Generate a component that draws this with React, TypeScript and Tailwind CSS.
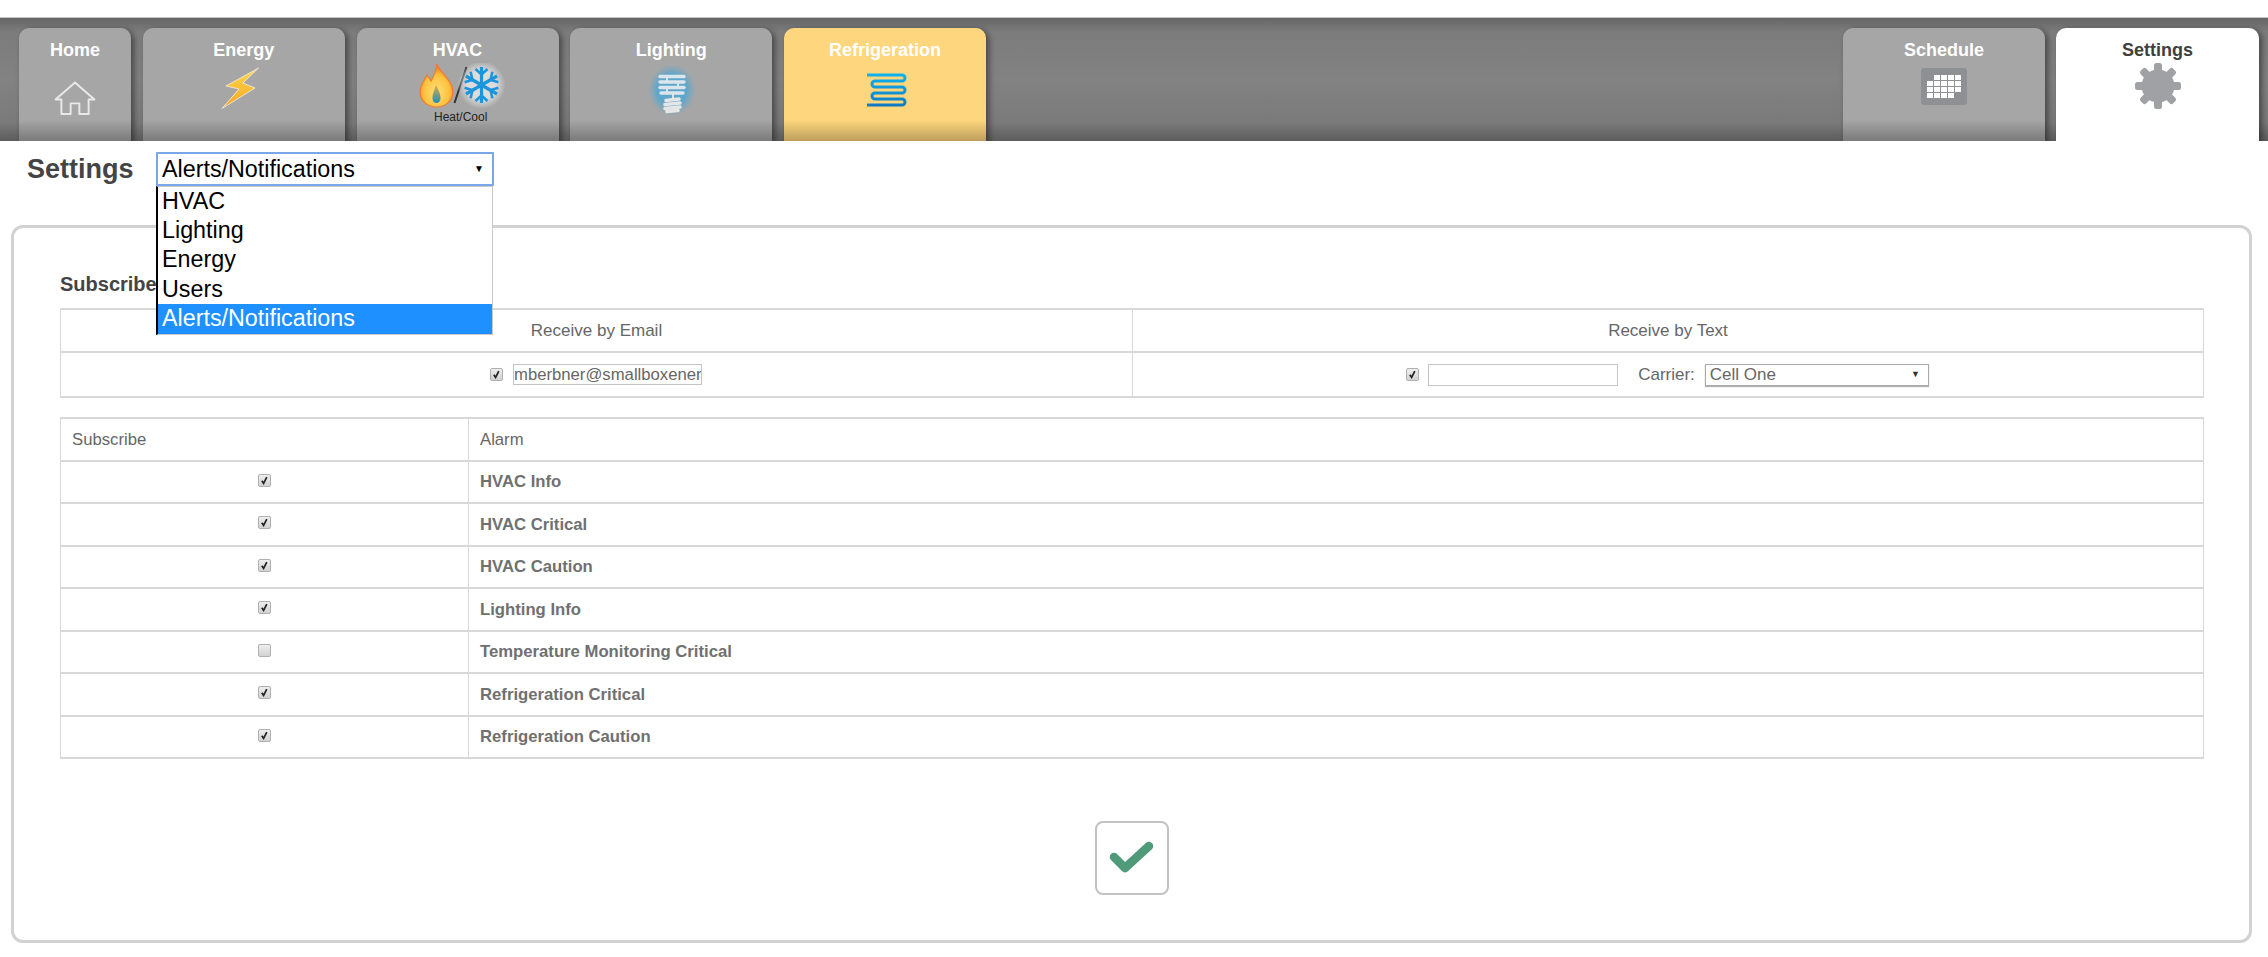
import React from "react";

const FONT = "font-['Liberation_Sans',Arial,sans-serif]";

function Check({ on = true }: { on?: boolean }) {
  return (
    <span className="inline-flex h-[13px] w-[13px] shrink-0 items-center justify-center rounded-[2px] border border-[#b0b0b0] bg-gradient-to-b from-[#eeeeee] to-[#d2d2d2]">
      {on && (
        <svg width="9" height="9" viewBox="0 0 9 9">
          <path d="M1.8 4.8 L3.6 7.4 L6.8 1.2" fill="none" stroke="#222" strokeWidth="1.7" />
        </svg>
      )}
    </span>
  );
}

function HomeIcon() {
  return (
    <svg width="44" height="35" viewBox="0 0 44 36" fill="none" stroke="#e9e9e9" strokeWidth="2">
      <path d="M2 19 L22 1.5 L42 19 L36 19 L36 34 L26.5 34 L26.5 23 L17.5 23 L17.5 34 L8 34 L8 19 Z" strokeLinejoin="round" />
    </svg>
  );
}

function BoltIcon() {
  return (
    <svg width="40" height="43" viewBox="0 0 40 43">
      <defs>
        <linearGradient id="bolt" x1="0" y1="0" x2="0" y2="1">
          <stop offset="0" stopColor="#ffd84f" />
          <stop offset="1" stopColor="#f5a623" />
        </linearGradient>
      </defs>
      <path d="M37.5 1 L5 19 L18 22 L1 41.5 L34 21 L22 16 Z" fill="url(#bolt)" stroke="#f4f0e2" strokeWidth="0.8" strokeLinejoin="round" />
    </svg>
  );
}

function HvacIcon() {
  const arms = [0, 60, 120, 180, 240, 300];
  return (
    <svg width="90" height="46" viewBox="0 0 90 46">
      <defs>
        <radialGradient id="flame" cx="0.5" cy="0.65" r="0.6">
          <stop offset="0" stopColor="#ffe27a" />
          <stop offset="0.65" stopColor="#fcc13d" />
          <stop offset="1" stopColor="#f0772a" />
        </radialGradient>
        <linearGradient id="inner" x1="0" y1="0" x2="0" y2="1">
          <stop offset="0" stopColor="#e9a53a" />
          <stop offset="1" stopColor="#1b8fc4" />
        </linearGradient>
        <radialGradient id="glow">
          <stop offset="0.6" stopColor="#dcdcdc" />
          <stop offset="1" stopColor="#dcdcdc" stopOpacity="0" />
        </radialGradient>
      </defs>
      <path d="M18 1 C20 9 34 17 34 29 C34 38 26 44 17.5 44 C9 44 1 38 1 29 C1 21 6 17 8 12 C10 15 11 16 12 18 C15 13 17 7 18 1 Z" fill="url(#flame)" stroke="#ee7b2c" strokeWidth="1.2" />
      <path d="M17 22 C20 28 21.5 31 21.5 35 C21.5 38.5 19.5 40 17.5 40 C15 40 13.5 38.5 13.5 35 C13.5 31 15 28 17 22 Z" fill="url(#inner)" />
      <line x1="47.5" y1="4" x2="35.5" y2="40" stroke="#333" strokeWidth="2" />
      <circle cx="62.5" cy="22" r="24" fill="url(#glow)" />
      <g stroke="#1b95dc" strokeWidth="3.2" fill="none" strokeLinecap="butt">
        {arms.map((a) => (
          <g key={a} transform={`rotate(${a} 62.5 22)`}>
            <line x1="62.5" y1="22" x2="62.5" y2="4" />
            <path d="M56.5 6 L62.5 11.5 L68.5 6" strokeWidth="2.6" />
          </g>
        ))}
      </g>
    </svg>
  );
}

function BulbIcon() {
  return (
    <svg width="52" height="56" viewBox="0 0 52 56">
      <defs>
        <radialGradient id="bulbglow">
          <stop offset="0.6" stopColor="#5da6cc" />
          <stop offset="1" stopColor="#6fa8c4" stopOpacity="0" />
        </radialGradient>
      </defs>
      <ellipse cx="26" cy="25" rx="24" ry="26" fill="url(#bulbglow)" />
      <g fill="none" stroke="#dbe6ec" strokeWidth="3.4" strokeLinecap="round">
        <path d="M14 11.5 H38" />
        <path d="M14 17 H38" />
        <path d="M14 22.5 H38" />
        <path d="M15 28 H37" />
        <path d="M21 11.5 V17 M32 17 V22.5 M21 22.5 V28 M27 28 V34" strokeWidth="2" />
      </g>
      <g fill="none" stroke="#e6e6e6" strokeWidth="3.6" strokeLinecap="round">
        <path d="M20 35.5 L33 34" />
        <path d="M19 39.5 L34 38" />
        <path d="M19 43.5 L34 42" />
        <path d="M21 46.5 L32 45.5" />
      </g>
    </svg>
  );
}

function CoilIcon() {
  return (
    <svg width="40" height="34" viewBox="0 0 40 34">
      <defs>
        <linearGradient id="coil" x1="0" y1="0" x2="0" y2="34" gradientUnits="userSpaceOnUse">
          <stop offset="0" stopColor="#0eb4ef" />
          <stop offset="1" stopColor="#0f78c2" />
        </linearGradient>
      </defs>
      <path
        d="M0 2 H35 A3 3 0 0 1 35 8 H8 A3 3 0 0 0 8 14 H35 A3 3 0 0 1 35 20 H8 A3 3 0 0 0 8 26 H35 A3 3 0 0 1 35 32 H0"
        fill="none"
        stroke="url(#coil)"
        strokeWidth="3"
      />
    </svg>
  );
}

function CalendarIcon() {
  const rows = [
    [0, 1, 1, 1, 1],
    [1, 1, 1, 1, 1],
    [1, 1, 1, 1, 1],
    [1, 1, 1, 1, 0],
  ];
  return (
    <div className="flex h-[37px] w-[46px] flex-col items-center justify-center gap-[1px] rounded-[3px] bg-[#8f9094]">
      {rows.map((r, i) => (
        <div key={i} className="flex gap-[1px]">
          {r.map((c, j) => (
            <span key={j} className={c ? "h-[5px] w-[6px] bg-white" : "h-[5px] w-[6px]"} />
          ))}
        </div>
      ))}
    </div>
  );
}

function GearIcon() {
  const teeth = [0, 45, 90, 135, 180, 225, 270, 315];
  return (
    <svg width="48" height="48" viewBox="0 0 48 48" fill="#a0a1a5">
      <circle cx="24" cy="24" r="16.5" />
      {teeth.map((a) => (
        <rect key={a} x="20" y="1" width="8" height="12" rx="2.5" transform={`rotate(${a} 24 24)`} />
      ))}
    </svg>
  );
}

type TabProps = {
  label: string;
  w: string;
  tone?: "gray" | "gold" | "white";
  children: React.ReactNode;
  iconClass: string;
};

function Tab({ label, w, tone = "gray", children, iconClass }: TabProps) {
  const bg =
    tone === "gold"
      ? "bg-[linear-gradient(to_bottom,#fed67e_0,#fed67e_92px,#bd9f5c_100%)] text-white"
      : tone === "white"
      ? "bg-white text-[#3f3f3f]"
      : "bg-[linear-gradient(to_bottom,#a6a6a6_0,#a6a6a6_92px,#7a7a7a_100%)] text-white";
  return (
    <div className={`${w} ${bg} flex h-[113px] shrink-0 flex-col items-center rounded-t-[10px] pt-[12px] shadow-[3px_2px_6px_rgba(0,0,0,0.45)]`}>
      <div className="text-[18px] font-bold leading-[21px]">{label}</div>
      <div className={iconClass}>{children}</div>
    </div>
  );
}

const alarms: [string, boolean][] = [
  ["HVAC Info", true],
  ["HVAC Critical", true],
  ["HVAC Caution", true],
  ["Lighting Info", true],
  ["Temperature Monitoring Critical", false],
  ["Refrigeration Critical", true],
  ["Refrigeration Caution", true],
];

const options = ["HVAC", "Lighting", "Energy", "Users", "Alerts/Notifications"];

const CELL = "border-x border-y-2 border-[#d8d8d8]";

export default function App() {
  return (
    <div className={`${FONT} relative h-[957px] w-[2268px] overflow-hidden bg-white`}>
      {/* top navigation */}
      <div className="mt-[17px] flex h-[124px] items-end justify-between overflow-hidden border-t border-[#c4c4c4] bg-[linear-gradient(to_bottom,#666_0,#7c7c7c_14px,#828282_50%,#7a7a7a_85%,#5c5c5c_100%)] pl-[19px] pr-[9px]">
        <div className="flex gap-[11.75px]">
          <Tab label="Home" w="w-[112px]" iconClass="mt-[20px]">
            <HomeIcon />
          </Tab>
          <Tab label="Energy" w="w-[202px]" iconClass="mt-[6px] mr-[6px]">
            <BoltIcon />
          </Tab>
          <Tab label="HVAC" w="w-[202px]" iconClass="relative mt-[2px] ml-[13px]">
            <HvacIcon />
            <span className="absolute left-[15px] top-[47px] whitespace-nowrap text-[12px] leading-[14px] text-[#222]">Heat/Cool</span>
          </Tab>
          <Tab label="Lighting" w="w-[202px]" iconClass="mt-[4px] ml-[2px]">
            <BulbIcon />
          </Tab>
          <Tab label="Refrigeration" w="w-[202px]" tone="gold" iconClass="mt-[12px] ml-[3px]">
            <CoilIcon />
          </Tab>
        </div>
        <div className="flex gap-[11px]">
          <Tab label="Schedule" w="w-[202px]" iconClass="mt-[7px]">
            <CalendarIcon />
          </Tab>
          <Tab label="Settings" w="w-[203px]" tone="white" iconClass="mt-[1px]">
            <GearIcon />
          </Tab>
        </div>
      </div>

      {/* heading with open select */}
      <div className="flex h-[84px] items-start pl-[27px] pt-[11px]">
        <h1 className="mt-[1px] w-[129px] text-[27px] font-bold leading-[32px] text-[#444]">Settings</h1>
        <div className="relative z-10 w-[338px]">
          <div className="flex h-[34px] items-center justify-between rounded-[1px] border-2 border-[#7ba6ea] pl-[4px] pr-[8px] text-[23.3px] leading-[28px] text-black">
            <span>Alerts/Notifications</span>
            <span className="text-[10px] leading-none">▼</span>
          </div>
          <div className="absolute left-0 top-[34px] w-[337px] border border-l-2 border-[#c9c9c9] border-l-black bg-white text-[23.3px] leading-[29px] text-black">
            {options.map((o, i) => (
              <div key={o} className={i === 4 ? "h-[30px] bg-[#1e90ff] pl-[4px] text-white" : "h-[29.2px] pl-[4px]"}>
                {o}
              </div>
            ))}
          </div>
        </div>
      </div>

      {/* card */}
      <div className="ml-[11px] mr-[16px] h-[718px] rounded-[12px] border-[3px] border-[#d2d2d2] px-[46px] pt-[44px]">
        <div className="h-[36px] text-[20px] font-bold leading-[24px] text-[#444]">Subscribe</div>

        <table className="w-[2144px] table-fixed border-collapse text-[17px] text-[#666]">
          <tbody>
            <tr className="h-[43px]">
              <td className={`w-[1072px] ${CELL} text-center`}>Receive by Email</td>
              <td className={`${CELL} text-center`}>Receive by Text</td>
            </tr>
            <tr className="h-[45px]">
              <td className={CELL}>
                <div className="flex items-center justify-center gap-[10px] pr-[1px]">
                  <Check />
                  <input
                    readOnly
                    defaultValue="mberbner@smallboxenergy.com"
                    className="h-[21px] w-[189px] border border-[#c4c4c4] text-[16.7px] text-[#666] outline-none"
                  />
                </div>
              </td>
              <td className={CELL}>
                <div className="flex items-center justify-center pr-[1px]">
                  <Check />
                  <span className="ml-[9px] h-[22px] w-[190px] border border-[#c4c4c4]" />
                  <span className="ml-[20px]">Carrier:</span>
                  <span className="ml-[10px] flex h-[22px] w-[224px] items-center justify-between border border-[#aaa] pl-[4px] pr-[8px] shadow-[0_1px_1px_rgba(0,0,0,0.3)]">
                    Cell One
                    <span className="text-[9px] leading-none text-[#333]">▼</span>
                  </span>
                </div>
              </td>
            </tr>
          </tbody>
        </table>

        <table className="mt-[19px] w-[2144px] table-fixed border-collapse text-[16.7px] text-[#666]">
          <tbody>
            <tr className="h-[42.5px]">
              <td className={`w-[408px] ${CELL} pl-[11px]`}>Subscribe</td>
              <td className={`${CELL} pl-[11px]`}>Alarm</td>
            </tr>
            {alarms.map(([name, on]) => (
              <tr key={name} className="h-[42.5px]">
                <td className={CELL}>
                  <div className="-mt-[3px] flex justify-center">
                    <Check on={on} />
                  </div>
                </td>
                <td className={`${CELL} pl-[11px] font-bold text-[#707070]`}>{name}</td>
              </tr>
            ))}
          </tbody>
        </table>

        <div className="mt-[62px] flex justify-center">
          <button className="flex h-[74px] w-[74px] items-center justify-center rounded-[8px] border-2 border-[#c2c2c2] bg-white">
            <svg width="46" height="34" viewBox="0 0 46 34">
              <path d="M5 16 L16 27 L40 5" fill="none" stroke="#4f9a78" strokeWidth="8.5" strokeLinecap="round" strokeLinejoin="round" />
            </svg>
          </button>
        </div>
      </div>
    </div>
  );
}
